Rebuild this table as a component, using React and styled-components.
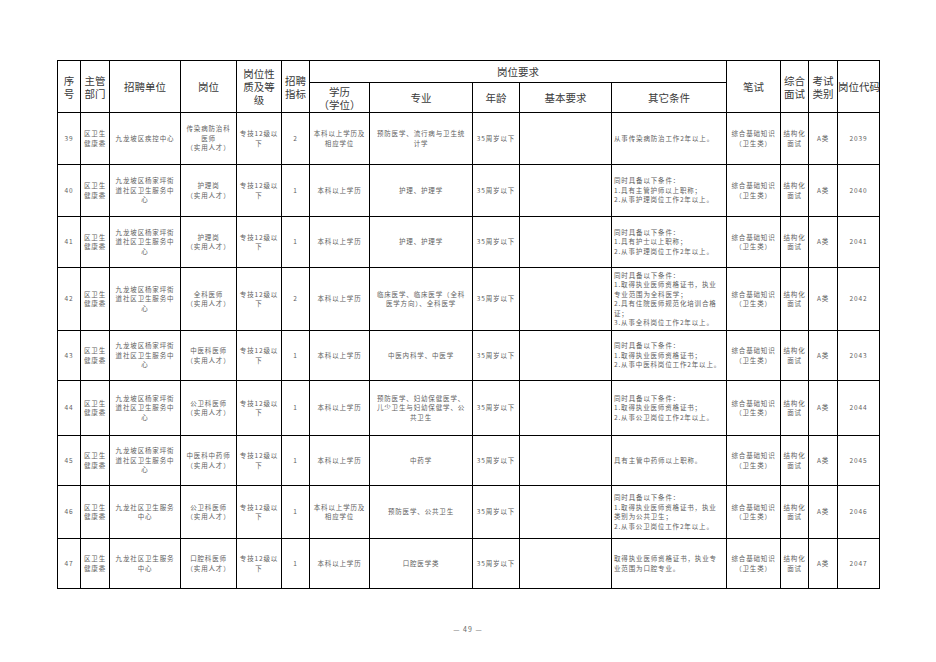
import React from "react";
import styled, { createGlobalStyle } from "styled-components";

const GlobalStyle = createGlobalStyle`
  html, body {
    margin: 0;
    padding: 0;
    background: #ffffff;
  }
  body {
    font-family: "Noto Sans CJK SC", "DejaVu Sans", sans-serif;
  }
`;

const Page = styled.div`
  width: 936px;
  height: 662px;
  box-sizing: border-box;
  padding: 60px 0 0 57px;
  display: flex;
  flex-direction: column;
`;

const Sheet = styled.table`
  width: 822px;
  table-layout: fixed;
  border-collapse: collapse;
  border: 1.5px solid #000;
`;

const HeadRow = styled.tr`
  height: ${(p) => p.$h}px;
`;

const HeadCell = styled.th`
  border: 1px solid #000;
  padding: 0;
  font-weight: normal;
  font-size: 10.5px;
  line-height: 13px;
  color: #3a3a3a;
  text-align: center;
  vertical-align: middle;
  white-space: pre;
  overflow: visible;
`;

const Row = styled.tr`
  height: ${(p) => p.$h}px;
`;

const Cell = styled.td`
  border: 1px solid #000;
  padding: ${(p) => (p.$left ? "0 0 0 2px" : "0")};
  font-size: 6.5px;
  line-height: 9.5px;
  letter-spacing: 0.85px;
  color: #5e5e5e;
  text-align: ${(p) => (p.$left ? "left" : "center")};
  vertical-align: middle;
  white-space: pre;
  overflow: hidden;
`;

const PageNumber = styled.div`
  width: 822px;
  margin-top: 35px;
  text-align: center;
  font-size: 7px;
  letter-spacing: 1px;
  color: #666;
`;

const widths = [23, 29, 71, 56, 45, 28, 60, 103, 47, 92, 115, 54, 28, 29, 42];

const unitA = "九龙坡区杨家坪街\n道社区卫生服务中\n心";
const unitB = "九龙社区卫生服务\n中心";
const dept = "区卫生\n健康委";
const grade = "专技12级以\n下";
const age = "35周岁以下";
const written = "综合基础知识\n（卫生类）";
const interview = "结构化\n面试";

const rows = [
  {
    h: 52, no: "39", unit: "九龙坡区疾控中心", post: "传染病防治科\n医师\n（实用人才）", num: "2",
    edu: "本科以上学历及\n相应学位", major: "预防医学、流行病与卫生统\n计学",
    other: "从事传染病防治工作2年以上。", code: "2039",
  },
  {
    h: 52, no: "40", unit: unitA, post: "护理岗\n（实用人才）", num: "1",
    edu: "本科以上学历", major: "护理、护理学",
    other: "同时具备以下条件：\n1.具有主管护师以上职称；\n2.从事护理岗位工作2年以上。", code: "2040",
  },
  {
    h: 51, no: "41", unit: unitA, post: "护理岗\n（实用人才）", num: "1",
    edu: "本科以上学历", major: "护理、护理学",
    other: "同时具备以下条件：\n1.具有护士以上职称；\n2.从事护理岗位工作2年以上。", code: "2041",
  },
  {
    h: 63, no: "42", unit: unitA, post: "全科医师\n（实用人才）", num: "2",
    edu: "本科以上学历", major: "临床医学、临床医学（全科\n医学方向）、全科医学",
    other: "同时具备以下条件：\n1.取得执业医师资格证书，执业\n专业范围为全科医学；\n2.具有住院医师规范化培训合格\n证；\n3.从事全科岗位工作2年以上。",
    code: "2042",
  },
  {
    h: 50, no: "43", unit: unitA, post: "中医科医师\n（实用人才）", num: "1",
    edu: "本科以上学历", major: "中医内科学、中医学",
    other: "同时具备以下条件：\n1.取得执业医师资格证书；\n2.从事中医科岗位工作2年以上。", code: "2043",
  },
  {
    h: 55, no: "44", unit: unitA, post: "公卫科医师\n（实用人才）", num: "1",
    edu: "本科以上学历", major: "预防医学、妇幼保健医学、\n儿少卫生与妇幼保健学、公\n共卫生",
    other: "同时具备以下条件：\n1.取得执业医师资格证书；\n2.从事公卫岗位工作2年以上。", code: "2044",
  },
  {
    h: 50, no: "45", unit: unitA, post: "中医科中药师\n（实用人才）", num: "1",
    edu: "本科以上学历", major: "中药学",
    other: "具有主管中药师以上职称。", code: "2045",
  },
  {
    h: 53, no: "46", unit: unitB, post: "公卫科医师\n（实用人才）", num: "1",
    edu: "本科以上学历及\n相应学位", major: "预防医学、公共卫生",
    other: "同时具备以下条件：\n1.取得执业医师资格证书，执业\n类别为公共卫生；\n2.从事公卫岗位工作2年以上。",
    code: "2046",
  },
  {
    h: 50, no: "47", unit: unitB, post: "口腔科医师\n（实用人才）", num: "1",
    edu: "本科以上学历", major: "口腔医学类",
    other: "取得执业医师资格证书，执业专\n业范围为口腔专业。", code: "2047",
  },
];

export default function App() {
  return (
    <>
      <GlobalStyle />
      <Page>
        <Sheet>
          <colgroup>
            {widths.map((w, i) => (
              <col key={i} style={{ width: w }} />
            ))}
          </colgroup>
          <thead>
            <HeadRow $h={22}>
              <HeadCell rowSpan={2}>{"序\n号"}</HeadCell>
              <HeadCell rowSpan={2}>{"主管\n部门"}</HeadCell>
              <HeadCell rowSpan={2}>招聘单位</HeadCell>
              <HeadCell rowSpan={2}>岗位</HeadCell>
              <HeadCell rowSpan={2}>{"岗位性\n质及等\n级"}</HeadCell>
              <HeadCell rowSpan={2}>{"招聘\n指标"}</HeadCell>
              <HeadCell colSpan={5}>岗位要求</HeadCell>
              <HeadCell rowSpan={2}>笔试</HeadCell>
              <HeadCell rowSpan={2}>{"综合\n面试"}</HeadCell>
              <HeadCell rowSpan={2}>{"考试\n类别"}</HeadCell>
              <HeadCell rowSpan={2}>岗位代码</HeadCell>
            </HeadRow>
            <HeadRow $h={30}>
              <HeadCell>{"学历\n（学位）"}</HeadCell>
              <HeadCell>专业</HeadCell>
              <HeadCell>年龄</HeadCell>
              <HeadCell>基本要求</HeadCell>
              <HeadCell>其它条件</HeadCell>
            </HeadRow>
          </thead>
          <tbody>
            {rows.map((r) => (
              <Row key={r.no} $h={r.h}>
                <Cell>{r.no}</Cell>
                <Cell>{dept}</Cell>
                <Cell>{r.unit}</Cell>
                <Cell>{r.post}</Cell>
                <Cell>{grade}</Cell>
                <Cell>{r.num}</Cell>
                <Cell>{r.edu}</Cell>
                <Cell>{r.major}</Cell>
                <Cell>{age}</Cell>
                <Cell />
                <Cell $left>{r.other}</Cell>
                <Cell>{written}</Cell>
                <Cell>{interview}</Cell>
                <Cell>A类</Cell>
                <Cell>{r.code}</Cell>
              </Row>
            ))}
          </tbody>
        </Sheet>
        <PageNumber>— 49 —</PageNumber>
      </Page>
    </>
  );
}
